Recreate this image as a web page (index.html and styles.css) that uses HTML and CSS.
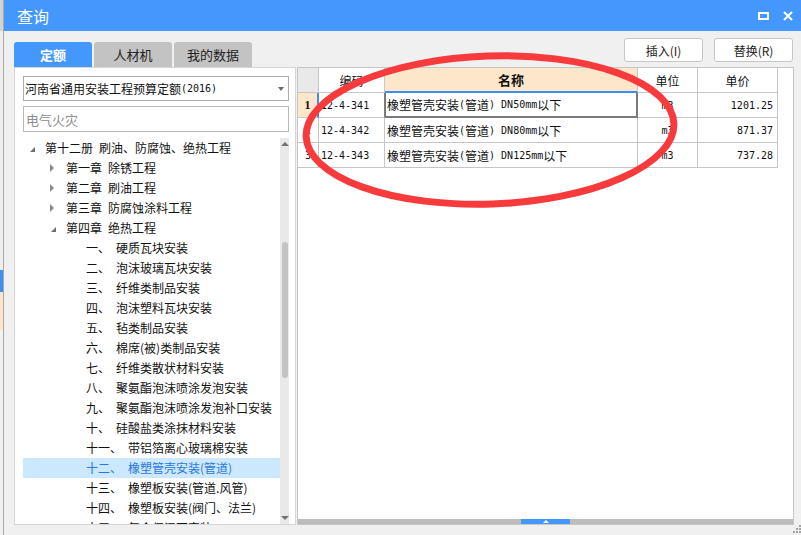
FILE: index.html
```html
<!DOCTYPE html>
<html lang="zh-CN">
<head>
<meta charset="utf-8">
<title>查询</title>
<link rel="stylesheet" href="styles.css">
</head>
<body>
<div class="screen">
  <div class="backdrop"></div>
  <div class="dialog">
    <div class="titlebar">
      <span class="title">查询</span>
      <div class="win-controls">
        <span class="ctl-max"></span>
        <svg class="ctl-close" width="10" height="10" viewBox="0 0 10 10"><path d="M1 1L9 9M9 1L1 9" stroke="#fff" stroke-width="2" fill="none"/></svg>
      </div>
    </div>
    <div class="body">
      <div class="toolbar">
        <div class="tabs">
          <div class="tab active">定额</div>
          <div class="tab">人材机</div>
          <div class="tab">我的数据</div>
        </div>
        <div class="actions">
          <button class="btn">插入(I)</button>
          <button class="btn">替换(R)</button>
        </div>
      </div>
      <div class="panels">
        <div class="left">
          <div class="select">河南省通用安装工程预算定额<span class="m">(2016)</span><span class="arrow"></span></div>
          <input class="search" type="text" placeholder="电气火灾">
          <div class="tree-wrap">
            <div class="tree">
              <div class="node l0"><span class="caret open"></span><span class="num">第十二册</span>刷油、防腐蚀、绝热工程</div>
              <div class="node l1"><span class="caret closed"></span><span class="num">第一章</span>除锈工程</div>
              <div class="node l1"><span class="caret closed"></span><span class="num">第二章</span>刷油工程</div>
              <div class="node l1"><span class="caret closed"></span><span class="num">第三章</span>防腐蚀涂料工程</div>
              <div class="node l1"><span class="caret open"></span><span class="num">第四章</span>绝热工程</div>
              <div class="node l2"><span class="num">一、</span>硬质瓦块安装</div>
              <div class="node l2"><span class="num">二、</span>泡沫玻璃瓦块安装</div>
              <div class="node l2"><span class="num">三、</span>纤维类制品安装</div>
              <div class="node l2"><span class="num">四、</span>泡沫塑料瓦块安装</div>
              <div class="node l2"><span class="num">五、</span>毡类制品安装</div>
              <div class="node l2"><span class="num">六、</span>棉席(被)类制品安装</div>
              <div class="node l2"><span class="num">七、</span>纤维类散状材料安装</div>
              <div class="node l2"><span class="num">八、</span>聚氨酯泡沫喷涂发泡安装</div>
              <div class="node l2"><span class="num">九、</span>聚氨酯泡沫喷涂发泡补口安装</div>
              <div class="node l2"><span class="num">十、</span>硅酸盐类涂抹材料安装</div>
              <div class="node l2"><span class="num">十一、</span>带铝箔离心玻璃棉安装</div>
              <div class="node l2 sel"><span class="num">十二、</span>橡塑管壳安装(管道)</div>
              <div class="node l2"><span class="num">十三、</span>橡塑板安装(管道.风管)</div>
              <div class="node l2"><span class="num">十四、</span>橡塑板安装(阀门、法兰)</div>
              <div class="node l2"><span class="num">十五、</span>复合保温瓦安装</div>
            </div>
            <div class="vscroll">
              <div class="vs-up"></div>
              <div class="vs-track"><div class="vs-thumb"></div></div>
              <div class="vs-down"></div>
            </div>
          </div>
        </div>
        <div class="right">
          <div class="grid">
            <div class="c corner"></div>
            <div class="c h">编码</div>
            <div class="c h hsel">名称</div>
            <div class="c h">单位</div>
            <div class="c h">单价</div>

            <div class="c rh rsel"><span class="mb">1</span></div>
            <div class="c code-cur"><span class="m">12-4-341</span></div>
            <div class="c cur">橡塑管壳安装<span class="m">(</span>管道<span class="m">) DN50mm</span>以下</div>
            <div class="c ctr"><span class="m">m3</span></div>
            <div class="c num-r"><span class="m">1201.25</span></div>

            <div class="c rh"><span class="m">2</span></div>
            <div class="c"><span class="m">12-4-342</span></div>
            <div class="c">橡塑管壳安装<span class="m">(</span>管道<span class="m">) DN80mm</span>以下</div>
            <div class="c ctr"><span class="m">m3</span></div>
            <div class="c num-r"><span class="m">871.37</span></div>

            <div class="c rh"><span class="m">3</span></div>
            <div class="c"><span class="m">12-4-343</span></div>
            <div class="c">橡塑管壳安装<span class="m">(</span>管道<span class="m">) DN125mm</span>以下</div>
            <div class="c ctr"><span class="m">m3</span></div>
            <div class="c num-r"><span class="m">737.28</span></div>
          </div>
          <div class="hbar"><div class="hthumb"></div></div>
        </div>
      </div>
    </div>
  </div>
  <svg class="annot" width="801" height="535" viewBox="0 0 801 535">
    <ellipse cx="490" cy="130" rx="184" ry="74" transform="rotate(-2 490 130)" fill="none" stroke="#f73b3d" stroke-width="7"/>
  </svg>
  <svg class="grip" width="9" height="9" viewBox="0 0 9 9">
    <rect x="7" y="0" width="2" height="2" fill="#a3a3a3"/>
    <rect x="4" y="3" width="2" height="2" fill="#a3a3a3"/>
    <rect x="7" y="3" width="2" height="2" fill="#a3a3a3"/>
    <rect x="1" y="6" width="2" height="2" fill="#a3a3a3"/>
    <rect x="4" y="6" width="2" height="2" fill="#a3a3a3"/>
    <rect x="7" y="6" width="2" height="2" fill="#a3a3a3"/>
  </svg>
</div>
</body>
</html>
```
FILE: styles.css
```css
* { box-sizing: border-box; margin: 0; padding: 0; }
html, body { width: 801px; height: 535px; overflow: hidden; }
body {
  font-family: "Noto Sans CJK SC", "Noto Sans", sans-serif;
  font-size: 12px;
  color: #111;
  background: #e6e6e6;
}
.screen { position: relative; display: flex; width: 801px; height: 535px; }

.backdrop {
  width: 4px;
  border-right: 1px solid #a9a9a9;
  background: linear-gradient(to bottom,
    #d2d2d2 0 31px, #eeeeee 31px 270px, #3f8ff0 270px 292px,
    #fbe5cd 292px 330px, #f2f2f2 330px);
}

.dialog { flex: 1; display: flex; flex-direction: column; min-width: 0; }

.titlebar {
  height: 31px;
  background: #4498fd;
  color: #fff;
  display: flex;
  align-items: center;
  justify-content: space-between;
  padding: 0 8px 0 13px;
}
.title { font-size: 16px; line-height: 1; }
.win-controls { display: flex; align-items: center; gap: 14px; }
.ctl-max { width: 11px; height: 8px; border: 2px solid #fff; }
.ctl-close { display: block; }

.body {
  flex: 1;
  display: flex;
  flex-direction: column;
  background: #f0f0f0;
  padding: 0 7px 10px 10px;
  min-height: 0;
}

.toolbar { height: 36px; display: flex; justify-content: space-between; }
.tabs { display: flex; gap: 2px; align-self: flex-end; }
.tab {
  width: 78px;
  height: 25px;
  border-radius: 3px 3px 0 0;
  background: #c3c3c3;
  color: #222;
  font-size: 13px;
  display: flex;
  align-items: center;
  justify-content: center;
}
.tab.active { background: #4498fd; color: #fff; font-weight: bold; }

.actions { display: flex; gap: 11px; padding-top: 7px; margin-right: 1px; align-self: flex-start; }
.btn {
  width: 79px;
  height: 24px;
  background: #fff;
  border: 1px solid #c6c6c6;
  border-radius: 3px;
  font-family: inherit;
  font-size: 12px;
  color: #222;
}

.panels { flex: 1; display: flex; gap: 1px; min-height: 0; }

.left {
  width: 282px;
  background: #fff;
  border: 1px solid #d6d6d6;
  padding: 8px 6px 0 8px;
  display: flex;
  flex-direction: column;
}
.select {
  height: 25px;
  border: 1px solid #acacac;
  display: flex;
  align-items: center;
  padding-left: 1px;
  color: #111;
  white-space: nowrap;
}
.select .arrow {
  margin-left: auto;
  margin-right: 4px;
  border-top: 4px solid #6a6a6a;
  border-left: 3px solid transparent;
  border-right: 3px solid transparent;
}
.search {
  height: 26px;
  margin-top: 5px;
  border: 1px solid #b8b8b8;
  padding-left: 2px;
  font-family: inherit;
  font-size: 13px;
  outline: none;
  color: #111;
}
.search::placeholder { color: #8d8d8d; }

.tree-wrap { flex: 1; margin-top: 6px; display: flex; min-height: 0; overflow: hidden; }
.tree { flex: 1; overflow: hidden; }
.node {
  height: 20px;
  display: flex;
  align-items: center;
  white-space: nowrap;
  color: #111;
  padding-bottom: 2px;
}
.l0 { padding-left: 6px; }
.l1 { padding-left: 27px; }
.l2 { padding-left: 63px; }
.caret { width: 16px; height: 18px; display: flex; align-items: center; flex: none; }
.caret.open::before {
  content: "";
  margin-left: 1px;
  margin-top: 4px;
  border-left: 5px solid transparent;
  border-bottom: 5px solid #6e6e6e;
}
.caret.closed::before {
  content: "";
  margin-top: 2px;
  border-left: 4px solid #8a8a8a;
  border-top: 4px solid transparent;
  border-bottom: 4px solid transparent;
}
.num { margin-right: 6px; }
.node.sel { background: #cce8ff; color: #2a78de; }

.vscroll { width: 9px; background: #e9e9e9; display: flex; flex-direction: column; flex: none; }
.vs-up, .vs-down { height: 12px; display: flex; align-items: center; justify-content: center; }
.vs-up::before {
  content: "";
  border-left: 4px solid transparent;
  border-right: 4px solid transparent;
  border-bottom: 4px solid #727272;
}
.vs-down::before {
  content: "";
  border-left: 4px solid transparent;
  border-right: 4px solid transparent;
  border-top: 4px solid #727272;
}
.vs-track { flex: 1; }
.vs-thumb {
  margin: 92px 0 0 2px;
  width: 6px;
  height: 136px;
  border-radius: 3px;
  background: #c3c3c3;
}

.right {
  flex: 1;
  background: #fff;
  border: 1px solid #c6c6c6;
  display: flex;
  flex-direction: column;
  min-width: 0;
}
.grid {
  flex: 1;
  display: grid;
  grid-template-columns: 21px 66px 253px 60px 80px;
  grid-auto-rows: 25px;
  align-content: start;
}
.c {
  border-right: 1px solid #c6c6c6;
  border-bottom: 1px solid #c6c6c6;
  display: flex;
  align-items: center;
  padding: 0 2px;
  overflow: hidden;
  white-space: nowrap;
  color: #111;
}
.h { justify-content: center; }
.corner { background: #e9e9e9; }
.hsel { background: #fde7cb; font-weight: bold; border-bottom: 2px solid #3b8ff3; font-size: 13px; }
.rh { justify-content: center; padding: 0; }
.rsel { background: #fde7cb; border-right: 2px solid #3b8ff3; }
.code-cur { border-right-color: #7b7b7b; }
.cur {
  border-right: 2px solid #7b7b7b;
  border-bottom: 2px solid #7b7b7b;
  box-shadow: inset 1px 0 0 #7b7b7b;
}
.ctr { justify-content: center; }
.num-r { justify-content: flex-end; padding-right: 4px; }
.m { font-family: "DejaVu Sans Mono", "Liberation Mono", monospace; font-size: 10px; }
.mb { font-family: "Liberation Serif", serif; font-size: 12px; font-weight: bold; }

.hbar { height: 5px; background: #bcbcbc; display: flex; justify-content: center; }
.hthumb {
  width: 49px;
  background: #4498fd;
  display: flex;
  align-items: center;
  justify-content: center;
}
.hthumb::before {
  content: "";
  border-left: 3px solid transparent;
  border-right: 3px solid transparent;
  border-bottom: 3px solid #fff;
}

.annot { position: absolute; left: 0; top: 0; pointer-events: none; }
.grip { position: absolute; right: 0; bottom: 1px; }
```
